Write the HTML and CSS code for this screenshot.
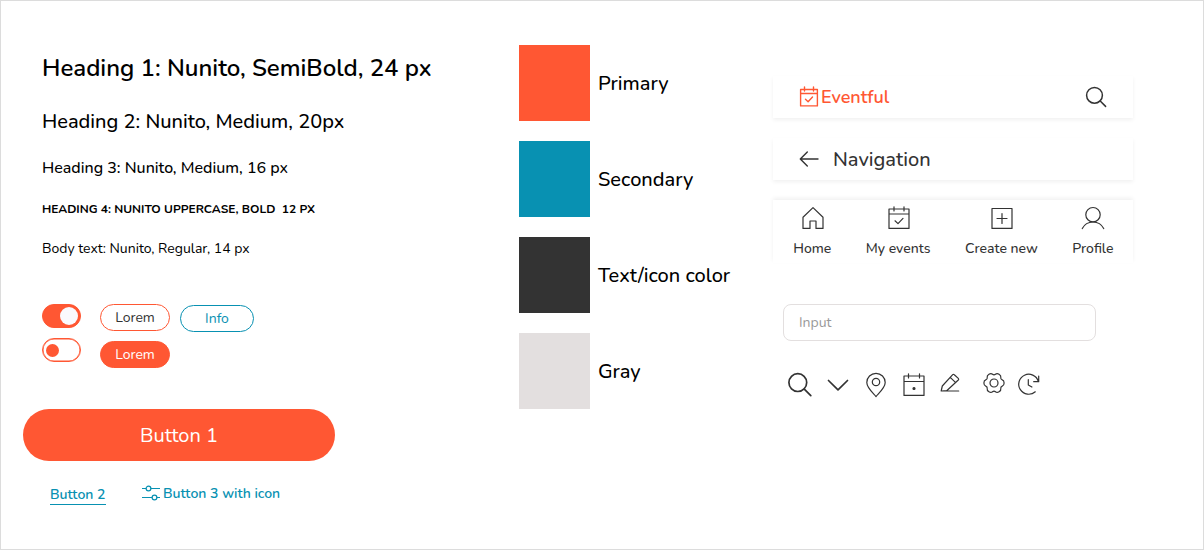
FILE: index.html
```html
<!DOCTYPE html>
<html lang="en">
<head>
<meta charset="utf-8">
<title>Eventful style guide</title>
<link rel="stylesheet" href="styles.css">
</head>
<body>
<main class="sheet">
  <section class="col-type">
    <h1 class="h1">Heading 1: Nunito, SemiBold, 24 px</h1>
    <h2 class="h2">Heading 2: Nunito, Medium, 20px</h2>
    <h3 class="h3">Heading 3: Nunito, Medium, 16 px</h3>
    <h4 class="h4">Heading 4: Nunito uppercase, bold&nbsp; 12 px</h4>
    <p class="copy">Body text: Nunito, Regular, 14 px</p>
    <div class="controls">
      <div class="toggles"><span class="toggle on"></span><span class="toggle"></span></div>
      <div class="chips"><span class="chip">Lorem</span><span class="chip filled">Lorem</span></div>
      <span class="chip info">Info</span>
    </div>
    <button class="primary">Button 1</button>
    <div class="links">
      <a class="link underlined">Button 2</a>
      <a class="link with-icon">
        <svg width="18" height="16" viewBox="0 0 18 16"><path d="M0 3.500h4M9 3.500h9M0 12.500h10M15 12.500h3"/><circle cx="6.500" cy="3.500" r="2.400"/><circle cx="12.500" cy="12.500" r="2.400"/></svg>
        <span>Button 3 with icon</span></a>
    </div>
  </section>

  <section class="col-color">
    <div class="swatch"><i class="c-primary"></i><span>Primary</span></div>
    <div class="swatch"><i class="c-secondary"></i><span>Secondary</span></div>
    <div class="swatch"><i class="c-text"></i><span>Text/icon color</span></div>
    <div class="swatch"><i class="c-gray"></i><span>Gray</span></div>
  </section>

  <section class="col-parts">
    <header class="bar brandbar">
      <svg class="brand-icon" width="20" height="22" viewBox="0 0 20 22"><path d="M1.600 3.500h16.800v16.400H1.600zM1.600 7.500h16.800M5.500 1v4M14.500 1v4M6.500 13.300l2.600 2.400 4.400-4.600"/></svg>
      <span class="brand">Eventful</span>
      <svg class="search" width="22" height="22" viewBox="0 0 22 22"><circle cx="9.500" cy="9.300" r="7.900"/><path d="M15.200 15l5.400 5.400"/></svg>
    </header>
    <header class="bar navbar">
      <svg width="20" height="16" viewBox="0 0 20 16"><path d="M19 8H1.500M8.300 1L1.300 8l7 7"/></svg>
      <span class="navtitle">Navigation</span>
    </header>
    <nav class="tabs">
      <a class="tab"><svg width="24" height="24" viewBox="0 0 24 24"><path d="M2 11.200L12 1.600l10 9.600v11.200h-7V15H9v7.400H2z"/></svg><span>Home</span></a>
      <a class="tab"><svg width="24" height="24" viewBox="0 0 24 24"><path d="M2 3h20v19.400H2zM2 8h20M7 .8V5M17 .8V5M8 14.800l3 2.800 5-5.200"/></svg><span>My events</span></a>
      <a class="tab"><svg width="24" height="24" viewBox="0 0 24 24"><path d="M2 2.500h20v19.900H2zM12 7.500v10M7 12.500h10"/></svg><span>Create new</span></a>
      <a class="tab"><svg width="24" height="24" viewBox="0 0 24 24"><circle cx="12" cy="8.700" r="7.200"/><path d="M1.300 22.600c2-4 5.800-6.600 10.700-6.600s8.700 2.600 10.700 6.600"/></svg><span>Profile</span></a>
    </nav>
    <div class="field">Input</div>
    <div class="icons">
      <svg class="heavy" width="26" height="26" viewBox="0 0 26 26"><circle cx="10.800" cy="10.600" r="8.900"/><path d="M17.300 17.200l6.500 6.500"/></svg>
      <svg class="heavy i-chevron" width="22" height="14" viewBox="0 0 22 14"><path d="M1.500 2.500l9.500 9.300 9.500-9.300"/></svg>
      <svg class="i-pin" width="22" height="26" viewBox="0 0 22 26"><path d="M11 24.500C7 20 1.800 15.500 1.800 10.500a9.200 9.200 0 0 1 18.400 0c0 5-5.200 9.500-9.200 14z"/><circle cx="11" cy="10" r="3.700"/></svg>
      <svg class="i-date" width="24" height="24" viewBox="0 0 24 24"><path d="M2 3h20v19.400H2zM2 8.500h20M6.500 .8V5M17.500 .8V5"/><circle class="dot" cx="12" cy="15.500" r="1"/></svg>
      <svg class="i-pen" width="22" height="22" viewBox="0 0 22 22"><path d="M2.200 19l1.100-5L13.700 2.700q.8-.8 1.600 0l4 3.700q.8.800 0 1.600L7.700 18.700zM2.200 19h17.500M11.200 5.400l5 4.700"/></svg>
      <svg class="i-gear" width="22" height="22" viewBox="0 0 22 22"><path d="M12.450 2.300Q13.900 1 16.050 2.250Q18.200 3.500 17.800 5.400Q17.400 7.300 19.250 7.900Q21.100 8.500 21.100 11Q21.100 13.500 19.250 14.100Q17.400 14.700 17.800 16.600Q18.200 18.500 16.050 19.750Q13.900 21 12.450 19.700Q11 18.400 9.550 19.700Q8.100 21 5.950 19.750Q3.800 18.500 4.200 16.600Q4.600 14.700 2.750 14.100Q.9 13.500 .9 11Q.9 8.500 2.750 7.900Q4.600 7.300 4.200 5.400Q3.800 3.500 5.950 2.250Q8.100 1 9.550 2.300Q11 3.600 12.450 2.300z"/><circle cx="11" cy="11" r="4"/></svg>
      <svg class="i-clock" width="24" height="24" viewBox="0 0 24 24"><path d="M22.300 9.300A10 10 0 1 0 19.300 19.800M22.700 4v5.700h-5M12.300 7.700V13l3.600 2"/></svg>
    </div>
  </section>
</main>
</body>
</html>
```
FILE: styles.css
```css
*{box-sizing:border-box}
body{margin:0;background:#fff;font-family:Nunito,Lato,sans-serif;color:#000}
h1,h2,h3,h4,p{margin:0}
svg{fill:none;stroke:currentColor;stroke-width:1.2;stroke-linecap:round;stroke-linejoin:round;flex:none;display:block}
.dot{fill:currentColor}
.heavy{stroke-width:1.7}
.sheet{width:1204px;height:550px;border:1px solid #dcdcdc;display:grid;grid-template-columns:518px 253px 1fr;overflow:hidden}

/* Typography and controls */
.col-type{padding:51px 0 0 41px}
.h1{font-size:24px;line-height:32px;font-weight:600}
.h2{font-size:20px;line-height:28px;margin-top:24px;font-weight:500}
.h3{font-size:16px;line-height:24px;margin-top:20px;font-weight:500}
.h4{font-size:12px;line-height:16px;margin-top:21px;font-weight:700;text-transform:uppercase}
.copy{font-size:14px;line-height:20px;margin-top:22px}
.controls{display:flex;align-items:flex-start;margin-top:45px;height:64px}
.toggles{display:grid;gap:10px;margin-right:19px}
.toggle{width:39px;height:24px;border-radius:12px;border:1.5px solid #ff5733;box-shadow:inset 0 0 0 .5px #ff5733;display:flex;align-items:center;padding-left:3px}
.toggle::before{content:"";width:13px;height:13px;border-radius:50%;background:#ff5733}
.toggle.on{background:#ff5733;justify-content:flex-end;padding:0 2px 0 0}
.toggle.on::before{width:18px;height:18px;background:#faf9fd}
.chips{display:grid;gap:10px;margin-right:10px}
.chip{width:70px;height:27px;border:1px solid #ff5733;border-radius:14px;display:flex;align-items:center;justify-content:center;font-size:14px;color:#333}
.filled{background:#ff5733;color:#fff}
.info{width:74px;border-color:#0891b2;color:#0891b2;margin-top:1px}
.primary{display:block;width:312px;height:52px;margin:41px 0 0 -19px;padding:0;border:0;border-radius:26px;background:#ff5733;color:#fff;font:400 20px Nunito,Lato,sans-serif}
.links{display:flex;align-items:flex-start;margin:23px 0 0 8px;color:#0891b2;font-size:14px;font-weight:600;line-height:20px}
.underlined{border-bottom:1px solid;width:56px;height:21px;padding-top:1px;margin-right:36px}
.with-icon{display:flex;gap:3px}
.with-icon svg{margin-top:1px}

/* Palette */
.col-color{display:flex;flex-direction:column;gap:20px;padding-top:44px}
.swatch{display:flex;align-items:center;gap:8px;font-size:20px;font-weight:500}
.swatch i{width:71px;height:76px}
.c-primary{background:#ff5733}
.c-secondary{background:#0891b2}
.c-text{background:#333}
.c-gray{background:#e3dfdf}

/* Components */
.col-parts{padding:75px 0 0 1px;color:#333}
.bar{display:flex;align-items:center;width:360px;height:42px;padding-left:26px;box-shadow:0 2px 4px rgba(0,0,0,.06)}
.brand{color:#ff5733;font-size:18px;font-weight:600;margin-left:2px}
.brand-icon{color:#ff5733;stroke-width:1.4}
.search{margin-left:auto;margin-right:26px;stroke-width:1.5}
.navbar{margin-top:20px}
.navbar svg{stroke-width:1.4}
.navtitle{font-size:20px;font-weight:500;margin-left:14px}
.tabs{display:flex;width:360px;height:63px;margin-top:20px;padding:6px 19.5px 0 20.2px;justify-content:space-between;box-shadow:0 -2px 4px rgba(0,0,0,.06);font-size:14px;font-weight:500;line-height:20px}
.tab{display:flex;flex-direction:column;align-items:center;gap:9px}
.tab svg{margin-left:1px}
.field{width:313px;height:37px;margin:41px 0 0 10px;border:1px solid #e3dfdf;border-radius:8px;padding-left:15px;display:flex;align-items:center;font-size:14px;color:#999}
.icons{display:flex;align-items:center;margin:31px 0 0 14px}
.i-chevron{margin-left:14px}
.i-pin{margin-left:16px}
.i-date{margin-left:15px}
.i-pen{margin-left:13px;align-self:flex-start}
.i-gear{margin-left:22px;align-self:flex-start}
.i-clock{margin-left:11px;align-self:flex-start}
```
